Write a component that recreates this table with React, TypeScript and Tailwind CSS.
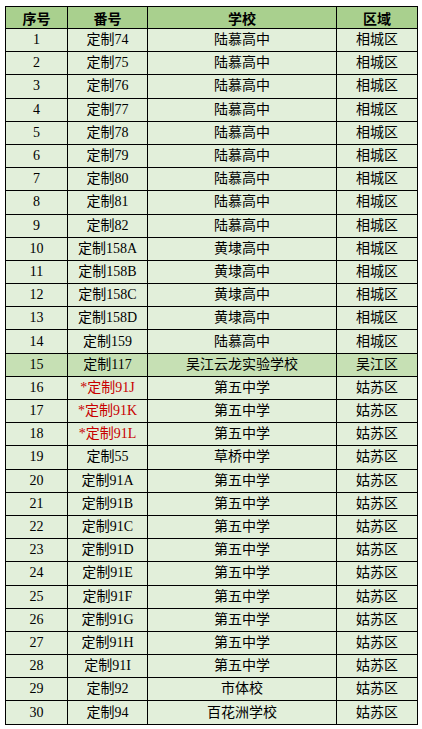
import React from 'react';

type Row = { id: number; code: string; school: string; area: string; red?: boolean; hi?: boolean };

const rows: Row[] = [
  { id: 1, code: '定制74', school: '陆慕高中', area: '相城区' },
  { id: 2, code: '定制75', school: '陆慕高中', area: '相城区' },
  { id: 3, code: '定制76', school: '陆慕高中', area: '相城区' },
  { id: 4, code: '定制77', school: '陆慕高中', area: '相城区' },
  { id: 5, code: '定制78', school: '陆慕高中', area: '相城区' },
  { id: 6, code: '定制79', school: '陆慕高中', area: '相城区' },
  { id: 7, code: '定制80', school: '陆慕高中', area: '相城区' },
  { id: 8, code: '定制81', school: '陆慕高中', area: '相城区' },
  { id: 9, code: '定制82', school: '陆慕高中', area: '相城区' },
  { id: 10, code: '定制158A', school: '黄埭高中', area: '相城区' },
  { id: 11, code: '定制158B', school: '黄埭高中', area: '相城区' },
  { id: 12, code: '定制158C', school: '黄埭高中', area: '相城区' },
  { id: 13, code: '定制158D', school: '黄埭高中', area: '相城区' },
  { id: 14, code: '定制159', school: '陆慕高中', area: '相城区' },
  { id: 15, code: '定制117', school: '吴江云龙实验学校', area: '吴江区', hi: true },
  { id: 16, code: '*定制91J', school: '第五中学', area: '姑苏区', red: true },
  { id: 17, code: '*定制91K', school: '第五中学', area: '姑苏区', red: true },
  { id: 18, code: '*定制91L', school: '第五中学', area: '姑苏区', red: true },
  { id: 19, code: '定制55', school: '草桥中学', area: '姑苏区' },
  { id: 20, code: '定制91A', school: '第五中学', area: '姑苏区' },
  { id: 21, code: '定制91B', school: '第五中学', area: '姑苏区' },
  { id: 22, code: '定制91C', school: '第五中学', area: '姑苏区' },
  { id: 23, code: '定制91D', school: '第五中学', area: '姑苏区' },
  { id: 24, code: '定制91E', school: '第五中学', area: '姑苏区' },
  { id: 25, code: '定制91F', school: '第五中学', area: '姑苏区' },
  { id: 26, code: '定制91G', school: '第五中学', area: '姑苏区' },
  { id: 27, code: '定制91H', school: '第五中学', area: '姑苏区' },
  { id: 28, code: '定制91I', school: '第五中学', area: '姑苏区' },
  { id: 29, code: '定制92', school: '市体校', area: '姑苏区' },
  { id: 30, code: '定制94', school: '百花洲学校', area: '姑苏区' },
];

export default function App() {
  return (
    <div className="min-h-screen bg-white pt-[6px] pl-[5px]" style={{ fontFamily: '"Liberation Serif", "Noto Sans CJK SC", serif' }}>
      <table className="table-fixed border-collapse border border-black text-[14px] text-black w-[412px]">
        <colgroup>
          <col className="w-[62px]" />
          <col className="w-[80px]" />
          <col className="w-[189px]" />
          <col className="w-[81px]" />
        </colgroup>
        <thead>
          <tr className="h-[22px] bg-[#a9d08e]" style={{ fontFamily: '"Noto Sans CJK SC", sans-serif' }}>
            <th className="border border-black p-0 text-center font-bold leading-none">序号</th>
            <th className="border border-black p-0 text-center font-bold leading-none">番号</th>
            <th className="border border-black p-0 text-center font-bold leading-none">学校</th>
            <th className="border border-black p-0 text-center font-bold leading-none">区域</th>
          </tr>
        </thead>
        <tbody>
          {rows.map(r => (
            <tr key={r.id} className={r.hi ? 'h-[23.2px] bg-[#c6e0b4]' : 'h-[23.2px] bg-[#e2efda]'}>
              <td className="border border-black p-0 text-center leading-none">{r.id}</td>
              <td className={r.red ? 'border border-black p-0 text-center leading-none text-[#c80000]' : 'border border-black p-0 text-center leading-none'}>{r.code}</td>
              <td className="border border-black p-0 text-center leading-none">{r.school}</td>
              <td className="border border-black p-0 text-center leading-none">{r.area}</td>
            </tr>
          ))}
        </tbody>
      </table>
    </div>
  );
}
